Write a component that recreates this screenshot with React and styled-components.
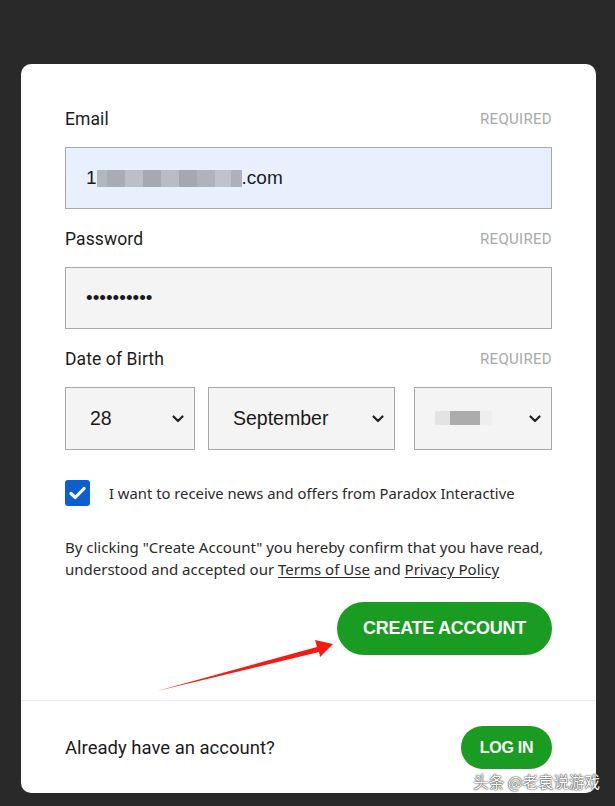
import React from 'react'
import styled, { createGlobalStyle } from 'styled-components'

const Global = createGlobalStyle`
  html, body { margin: 0; padding: 0; }
  body {
    background: #292929;
    font-family: Roboto, "Liberation Sans", sans-serif;
    color: #1b1b1b;
  }
`

const Page = styled.div`
  width: 615px;
  height: 806px;
  padding: 64px 19px 0 21px;
  box-sizing: border-box;
  overflow: hidden;
  position: relative;
`

const Card = styled.div`
  position: relative;
  background: #fff;
  border-radius: 10px;
  height: 729px;
  display: flex;
  flex-direction: column;
`

const Form = styled.div`
  padding: 44px 44px 0 44px;
  display: flex;
  flex-direction: column;
`

const LabelRow = styled.div`
  display: flex;
  justify-content: space-between;
  align-items: center;
  height: 22px;
  margin-bottom: 17px;
`

const Label = styled.span`
  font-size: 17.5px;
  letter-spacing: 0.1px;
`

const Required = styled.span`
  font-size: 15px;
  color: #a9a9a9;
  letter-spacing: 0.3px;
`

const Field = styled.div`
  height: 62px;
  box-sizing: border-box;
  border: 1px solid #a8a8a8;
  background: ${p => (p.$filled ? '#e8f0fe' : '#f4f4f4')};
  display: flex;
  align-items: center;
  padding: 0 20px;
  font-family: "Liberation Sans", Arial, sans-serif;
  font-size: 19px;
  margin-bottom: ${p => p.$gap || 0}px;
`

const Blur = styled.span`
  display: inline-block;
  width: ${p => p.$w}px;
  height: ${p => p.$h || 17}px;
  background: ${p => p.$c};
`

const Dots = styled.span`
  font-size: 19px;
  letter-spacing: 0;
`

const DateRow = styled.div`
  display: grid;
  grid-template-columns: 130px 187px 1fr;
  column-gap: 13px;
  margin-bottom: 30px;
`

const Select = styled(Field)`
  height: 63px;
  justify-content: space-between;
  padding: 0 10px 0 ${p => p.$pl}px;
  font-size: 19.5px;
  width: ${p => (p.$w ? `${p.$w}px` : 'auto')};
  justify-self: end;
`

const CheckRow = styled.label`
  display: flex;
  align-items: center;
  gap: 19px;
  font-family: "Noto Sans", "Open Sans", sans-serif;
  font-size: 14.8px;
  color: #2a2a2a;
  margin-bottom: 30px;
`

const Box = styled.span`
  width: 25px;
  height: 26px;
  border-radius: 3px;
  background: #0c5fcd;
  display: flex;
  align-items: center;
  justify-content: center;
`

const Terms = styled.p`
  margin: 0 0 22px;
  font-family: "Noto Sans", "Open Sans", sans-serif;
  font-size: 15px;
  line-height: 22px;
  color: #2a2a2a;
  a { color: #2a2a2a; text-decoration: underline; text-underline-offset: 2px; }
`

const Actions = styled.div`
  display: flex;
  justify-content: flex-end;
`

const GreenButton = styled.button`
  border: none;
  border-radius: 999px;
  background: #1a9b21;
  color: #fff;
  font-family: "Liberation Sans", Arial, sans-serif;
  font-weight: 700;
  text-transform: uppercase;
  letter-spacing: -0.3px;
  width: ${p => p.$w}px;
  height: ${p => p.$h}px;
  font-size: ${p => p.$fs}px;
  padding: 0;
`

const Divider = styled.div`
  margin-top: 45px;
  border-top: 1px solid #ececec;
`

const Footer = styled.div`
  display: flex;
  justify-content: space-between;
  align-items: center;
  padding: 25px 44px 0 44px;
`

const FooterText = styled.span`
  font-size: 18.5px;
`

const Arrow = styled.svg`
  position: absolute;
  left: 130px;
  top: 570px;
  pointer-events: none;
`

const Watermark = styled.div`
  position: absolute;
  right: -4px;
  bottom: 1px;
  font-family: "Noto Sans CJK SC", sans-serif;
  font-size: 15.5px;
  color: #fff;
  text-shadow: 0 0 2px #333, 0 0 1px #000;
`

const Chevron = () => (
  <svg width="12" height="8" viewBox="0 0 12 8">
    <path d="M1.5 1.5 L6 6 L10.5 1.5" fill="none" stroke="#222" strokeWidth="2.2" strokeLinecap="round" strokeLinejoin="round" />
  </svg>
)

const Field2 = ({ label, children }) => (
  <>
    <LabelRow>
      <Label>{label}</Label>
      <Required>REQUIRED</Required>
    </LabelRow>
    {children}
  </>
)

const emailBlur = [
  ['#b4b7c0', 10], ['#a9acb6', 18], ['#bcbfc8', 18], ['#a6a9b2', 18],
  ['#b9bcc6', 18], ['#a5a8b1', 18], ['#b0b3bd', 18], ['#c0c3cd', 16], ['#aeb1bb', 11]
]

export default function App() {
  return (
    <>
      <Global />
      <Page>
        <Card>
          <Form>
            <Field2 label="Email">
              <Field $filled $gap={19}>
                1
                {emailBlur.map(([c, w], i) => (
                  <Blur key={i} $w={w} $c={c} />
                ))}
                .com
              </Field>
            </Field2>
            <Field2 label="Password">
              <Field $gap={19}>
                <Dots>••••••••••</Dots>
              </Field>
            </Field2>
            <Field2 label="Date of Birth">
              <DateRow>
                <Select $pl={24} $w={130}>28<Chevron /></Select>
                <Select $pl={24} $w={187}>September<Chevron /></Select>
                <Select $pl={20} $w={138}>
                  <span>
                    <Blur $w={15} $h={14} $c="#e3e3e3" />
                    <Blur $w={30} $h={14} $c="#acacac" />
                    <Blur $w={12} $h={14} $c="#eeeeee" />
                  </span>
                  <Chevron />
                </Select>
              </DateRow>
            </Field2>
            <CheckRow>
              <Box>
                <svg width="17" height="14" viewBox="0 0 17 14">
                  <path d="M2 7.5 L6.3 11.5 L15 2.5" fill="none" stroke="#fff" strokeWidth="3.2" strokeLinecap="round" strokeLinejoin="round" />
                </svg>
              </Box>
              I want to receive news and offers from Paradox Interactive
            </CheckRow>
            <Terms>
              By clicking "Create Account" you hereby confirm that you have read, understood and accepted our{' '}
              <a>Terms of Use</a> and <a>Privacy Policy</a>
            </Terms>
            <Actions>
              <GreenButton $w={215} $h={53} $fs={18}>Create Account</GreenButton>
            </Actions>
          </Form>
          <Divider />
          <Footer>
            <FooterText>Already have an account?</FooterText>
            <GreenButton $w={91} $h={43} $fs={16}>Log In</GreenButton>
          </Footer>
          <Arrow width="220" height="80" viewBox="0 0 220 80">
            <path d="M6 57 L166 13 L164 6 L182 10 L169 23 L168 18 Z" fill="#f51b12" />
          </Arrow>
          <Watermark>头条 @老袁说游戏</Watermark>
        </Card>
      </Page>
    </>
  )
}
